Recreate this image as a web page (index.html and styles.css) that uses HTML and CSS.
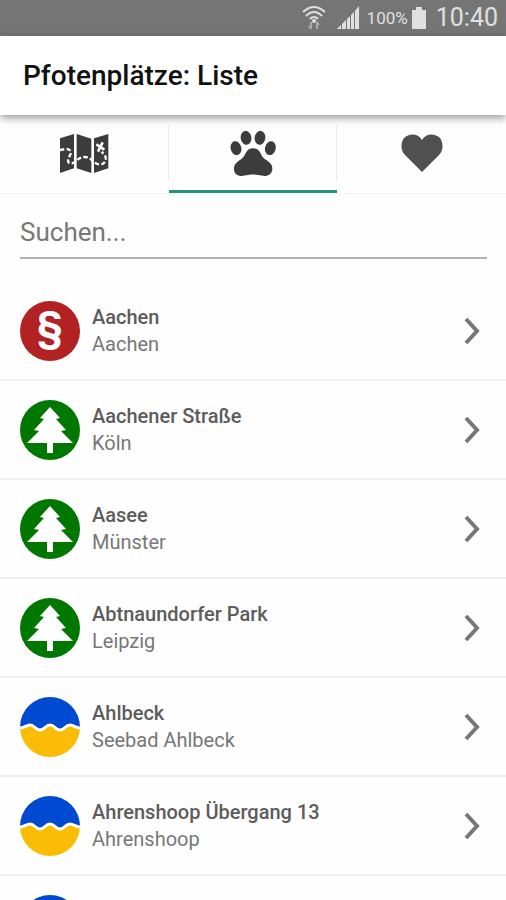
FILE: index.html
```html
<!DOCTYPE html>
<html lang="de">

<head>
    <meta charset="UTF-8">
    <meta name="viewport" content="width=device-width, initial-scale=1.0">
    <title>Pfotenplätze: Liste</title>
    <link rel="stylesheet" href="styles.css">
</head>

<body>
    <!-- Shared icons -->
    <svg class="sprite" aria-hidden="true">
        <symbol id="icon-tree" viewBox="0 0 60 60">
            <path d="M30 7 L40 18 L36 19 L46 30 L41 31 L53 43 L33 43 L33 53 L27 53 L27 43 L7 43 L19 31 L14 30 L24 19 L20 18 Z" />
        </symbol>
        <symbol id="icon-beach" viewBox="0 0 60 60">
            <rect width="60" height="32" fill="#0049d1" />
            <path d="M0 31 C5 31 6 28 10 28 C15 28 15 33 20 33 C25 33 25 28 30 28 C35 28 35 33 40 33 C45 33 45 28 50 28 C54 28 55 31 60 31 V60 H0 Z" fill="#fbbc05" />
            <path d="M0 31 C5 31 6 28 10 28 C15 28 15 33 20 33 C25 33 25 28 30 28 C35 28 35 33 40 33 C45 33 45 28 50 28 C54 28 55 31 60 31" fill="none" stroke="#fff" stroke-width="3" />
        </symbol>
        <symbol id="icon-chevron" viewBox="0 0 16 28">
            <path d="M2 2 L13 14 L2 26" fill="none" stroke="#777" stroke-width="4" />
        </symbol>
    </svg>

    <div class="screen">
        <div class="status-bar">
            <svg class="wifi" viewBox="0 0 24 26">
                <g fill="none" stroke="#e0e0e0" stroke-width="2">
                    <path d="M1 7 Q12 -3 23 7" />
                    <path d="M4 11 Q12 3 20 11" />
                    <path d="M8 14 Q12 10 16 14" />
                </g>
                <circle cx="12" cy="16" r="2" fill="#e0e0e0" />
                <path d="M9 17 V24 M7 21 L9 24 M15 24 V17 M15 17 L17 20" fill="none" stroke="#aaa" stroke-width="2" />
            </svg>
            <svg class="signal" viewBox="0 0 24 24">
                <path d="M1 23 L5 19 V23 Z M6 18 L10 14 V23 H6 Z M11 13 L14 10 V23 H11 Z M15 9 L18 6 V23 H15 Z M19 5 L23 0 V23 H19 Z" fill="#e0e0e0" />
            </svg>
            <span class="percent">100%</span>
            <svg class="battery" viewBox="0 0 16 24">
                <path d="M5 1 H11 V4 H15 V23 H1 V4 H5 Z" fill="#e0e0e0" />
            </svg>
            <span class="clock">10:40</span>
        </div>

        <header class="title-bar">
            <h1>Pfotenplätze: Liste</h1>
        </header>

        <nav class="tabs">
            <button type="button" class="tab" aria-label="Karte">
                <svg class="map" viewBox="58 40 150 123">
                    <path d="M61 56 L103 43 V146 L61 160 Z M111 43 L155 57 V160 L111 146 Z M163 56 L206 43 V146 L163 160 Z" fill="#3c3c3c" />
                    <path d="M61 91 L78 88 C92 87 97 97 91 107 C82 122 83 133 97 131 C110 127 116 112 135 112 C156 112 158 130 177 134 C194 137 203 120 196 108 L186 96" fill="none" stroke="#fff" stroke-width="7" stroke-dasharray="13 7" />
                    <path d="M170 74 L194 90 M189 68 L175 96" stroke="#fff" stroke-width="8" />
                </svg>
            </button>
            <button type="button" class="tab active" aria-label="Liste">
                <svg class="paw" viewBox="90 31 138 140">
                    <g fill="#3c3c3c">
                        <ellipse cx="138" cy="54" rx="16" ry="21" transform="rotate(-8 138 54)" />
                        <ellipse cx="180" cy="54" rx="16" ry="21" transform="rotate(8 180 54)" />
                        <ellipse cx="108" cy="85" rx="16" ry="21" transform="rotate(-14 108 85)" />
                        <ellipse cx="211" cy="85" rx="16" ry="21" transform="rotate(14 211 85)" />
                        <path d="M159 85 C180 85 181 104 190 114 C201 124 218 129 217 148 C216 163 203 170 188 168 C176 166 170 164 159 164 C148 164 142 166 130 168 C115 170 102 163 102 148 C101 129 118 124 128 114 C138 104 138 85 159 85 Z" />
                    </g>
                </svg>
            </button>
            <button type="button" class="tab" aria-label="Favoriten">
                <svg class="heart" viewBox="0 0 42 38">
                    <path d="M21 38 L4 21 C-1 16 0 8 3 4 C8 -1 17 -1 21 6 C25 -1 34 -1 39 4 C42 8 43 16 38 21 Z" fill="#505050" />
                </svg>
            </button>
        </nav>

        <main class="content">
            <form class="search">
                <input type="text" id="search" placeholder="Suchen..." aria-label="Suchen">
            </form>

            <ul class="places">
                <li>
                    <a href="#" class="place">
                        <span class="badge law">§</span>
                        <span class="info"><strong>Aachen</strong><span>Aachen</span></span>
                        <svg class="chevron"><use href="#icon-chevron" /></svg>
                    </a>
                </li>
                <li>
                    <a href="#" class="place">
                        <svg class="badge park"><use href="#icon-tree" /></svg>
                        <span class="info"><strong>Aachener Straße</strong><span>Köln</span></span>
                        <svg class="chevron"><use href="#icon-chevron" /></svg>
                    </a>
                </li>
                <li>
                    <a href="#" class="place">
                        <svg class="badge park"><use href="#icon-tree" /></svg>
                        <span class="info"><strong>Aasee</strong><span>Münster</span></span>
                        <svg class="chevron"><use href="#icon-chevron" /></svg>
                    </a>
                </li>
                <li>
                    <a href="#" class="place">
                        <svg class="badge park"><use href="#icon-tree" /></svg>
                        <span class="info"><strong>Abtnaundorfer Park</strong><span>Leipzig</span></span>
                        <svg class="chevron"><use href="#icon-chevron" /></svg>
                    </a>
                </li>
                <li>
                    <a href="#" class="place">
                        <svg class="badge"><use href="#icon-beach" /></svg>
                        <span class="info"><strong>Ahlbeck</strong><span>Seebad Ahlbeck</span></span>
                        <svg class="chevron"><use href="#icon-chevron" /></svg>
                    </a>
                </li>
                <li>
                    <a href="#" class="place">
                        <svg class="badge"><use href="#icon-beach" /></svg>
                        <span class="info"><strong>Ahrenshoop Übergang 13</strong><span>Ahrenshoop</span></span>
                        <svg class="chevron"><use href="#icon-chevron" /></svg>
                    </a>
                </li>
                <li>
                    <div class="place">
                        <svg class="badge"><use href="#icon-beach" /></svg>
                    </div>
                </li>
            </ul>
        </main>
    </div>
</body>

</html>
```
FILE: styles.css
```css
/* Global Styles */
* {
    box-sizing: border-box;
}

body {
    margin: 0;
    font-family: Roboto, "Liberation Sans", sans-serif;
    background-color: #fefefe;
    color: #666;
}

.sprite {
    display: none;
}

.screen {
    display: flex;
    flex-direction: column;
    height: 100vh;
}

/* Status bar */
.status-bar {
    display: flex;
    flex: none;
    align-items: center;
    justify-content: flex-end;
    height: 36px;
    padding: 0 8px;
    background-color: #757575;
    color: #e0e0e0;
}

.wifi {
    width: 24px;
    height: 26px;
    margin-right: 10px;
}

.signal {
    width: 24px;
    height: 24px;
    margin-right: 7px;
}

.percent {
    font-size: 17px;
}

.battery {
    width: 16px;
    height: 24px;
    margin: 0 9px 0 3px;
}

.clock {
    font-size: 25px;
    line-height: 36px;
}

/* Title */
.title-bar {
    display: flex;
    flex: none;
    align-items: center;
    height: 79px;
    padding: 0 23px;
    background-color: #fff;
    box-shadow: 0 3px 8px rgba(0, 0, 0, 0.4);
    z-index: 1;
}

h1 {
    margin: 0;
    font-size: 28px;
    font-weight: 500;
    color: #111;
}

/* Tabs */
.tabs {
    display: grid;
    flex: none;
    grid-template-columns: repeat(3, 1fr);
    height: 79px;
    border-bottom: 1px solid #f2f2f2;
}

.tab {
    display: flex;
    align-items: center;
    justify-content: center;
    padding: 1px 0 0;
    border: none;
    border-bottom: 3px solid transparent;
    background: linear-gradient(#ececec, #ececec) no-repeat right 10px / 1px 56px;
    cursor: pointer;
}

.tab:last-child {
    background: none;
}

.tab.active {
    border-bottom-color: #26937f;
}

.map {
    width: 50px;
    height: 41px;
}

.paw {
    width: 46px;
    height: 47px;
}

.heart {
    width: 42px;
    height: 38px;
}

/* Search */
.content {
    flex: 1;
    min-height: 0;
    overflow-y: auto;
    scrollbar-width: none;
}

.search {
    padding: 13px 19px 23px 20px;
}

.search input {
    display: block;
    width: 100%;
    height: 52px;
    padding: 0;
    border: none;
    border-bottom: 2px solid #b0b3b1;
    background: none;
    font-family: inherit;
    font-size: 26px;
    color: #666;
    outline: none;
}

.search input::placeholder {
    color: #777;
    opacity: 1;
}

/* List */
.places {
    margin: 0;
    padding: 0;
    list-style: none;
}

.place {
    display: flex;
    align-items: center;
    min-height: 99px;
    padding: 0 26px 0 20px;
    border-bottom: 2px solid #f0f0f0;
    color: #777;
    text-decoration: none;
}

.badge {
    flex: none;
    width: 60px;
    height: 60px;
    border-radius: 50%;
}

.law {
    background-color: #b22222;
    color: #fff;
    font-size: 42px;
    font-weight: bold;
    line-height: 52px;
    text-align: center;
}

.park {
    background-color: #007800;
    fill: #fff;
}

.info {
    display: flex;
    flex: 1;
    flex-direction: column;
    margin-left: 12px;
    font-size: 20px;
    line-height: 27px;
}

.info strong {
    font-weight: 500;
    color: #5c5c5c;
}

.chevron {
    width: 16px;
    height: 28px;
}
```
